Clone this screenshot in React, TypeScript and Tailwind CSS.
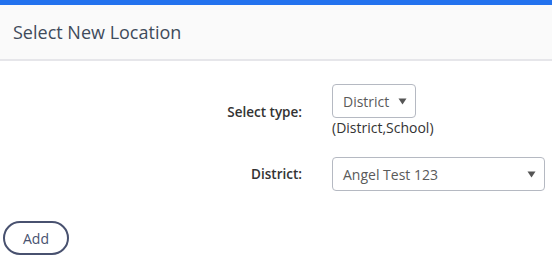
import React from "react";

const Caret = () => (
  <svg width="9" height="7" viewBox="0 0 9 7" className="shrink-0">
    <path d="M0.5 0.5 L8.5 0.5 L4.5 6.5 Z" fill="#555" />
  </svg>
);

export default function App() {
  return (
    <div className="w-[552px] h-[263px] bg-white overflow-hidden" style={{ fontFamily: '"Open Sans", sans-serif' }}>
      <div className="h-[5px] bg-[#2372ee]" />
      <div className="h-[56px] bg-[#fafafa] border-b-2 border-[#e6e6ea] flex items-center pl-[13px]">
        <span className="text-[18px] text-[#3f4b5b] leading-[24px]">Select New Location</span>
      </div>
      <div className="pt-[23px]">
        <div className="flex items-center">
          <div className="w-[302px] text-right text-[13.5px] leading-[20px] font-semibold text-[#333] pt-[2px]">Select type:</div>
          <div className="ml-[30px] flex flex-col">
            <div className="w-[84px] h-[34px] border border-[#b5b9c2] rounded-[4px] flex items-center justify-between pl-[10px] pr-[8px] text-[14px] text-[#5a5a5a]">
              <span>District</span>
              <Caret />
            </div>
            <div className="text-[14px] leading-[20px] text-[#333]">(District,School)</div>
          </div>
        </div>
        <div className="flex items-center mt-[19px]">
          <div className="w-[302px] text-right text-[13.5px] leading-[20px] font-semibold text-[#333]">District:</div>
          <div className="ml-[30px] w-[213px] h-[34px] border border-[#b5b9c2] rounded-[4px] flex items-center justify-between pl-[10px] pr-[8px] text-[14px] text-[#5a5a5a]">
            <span>Angel Test 123</span>
            <Caret />
          </div>
        </div>
        <div className="mt-[30px] pl-[3px]">
          <button className="w-[66px] h-[34px] rounded-full border-2 border-[#48516f] text-[14px] text-[#48516f] bg-white">
            Add
          </button>
        </div>
      </div>
    </div>
  );
}
